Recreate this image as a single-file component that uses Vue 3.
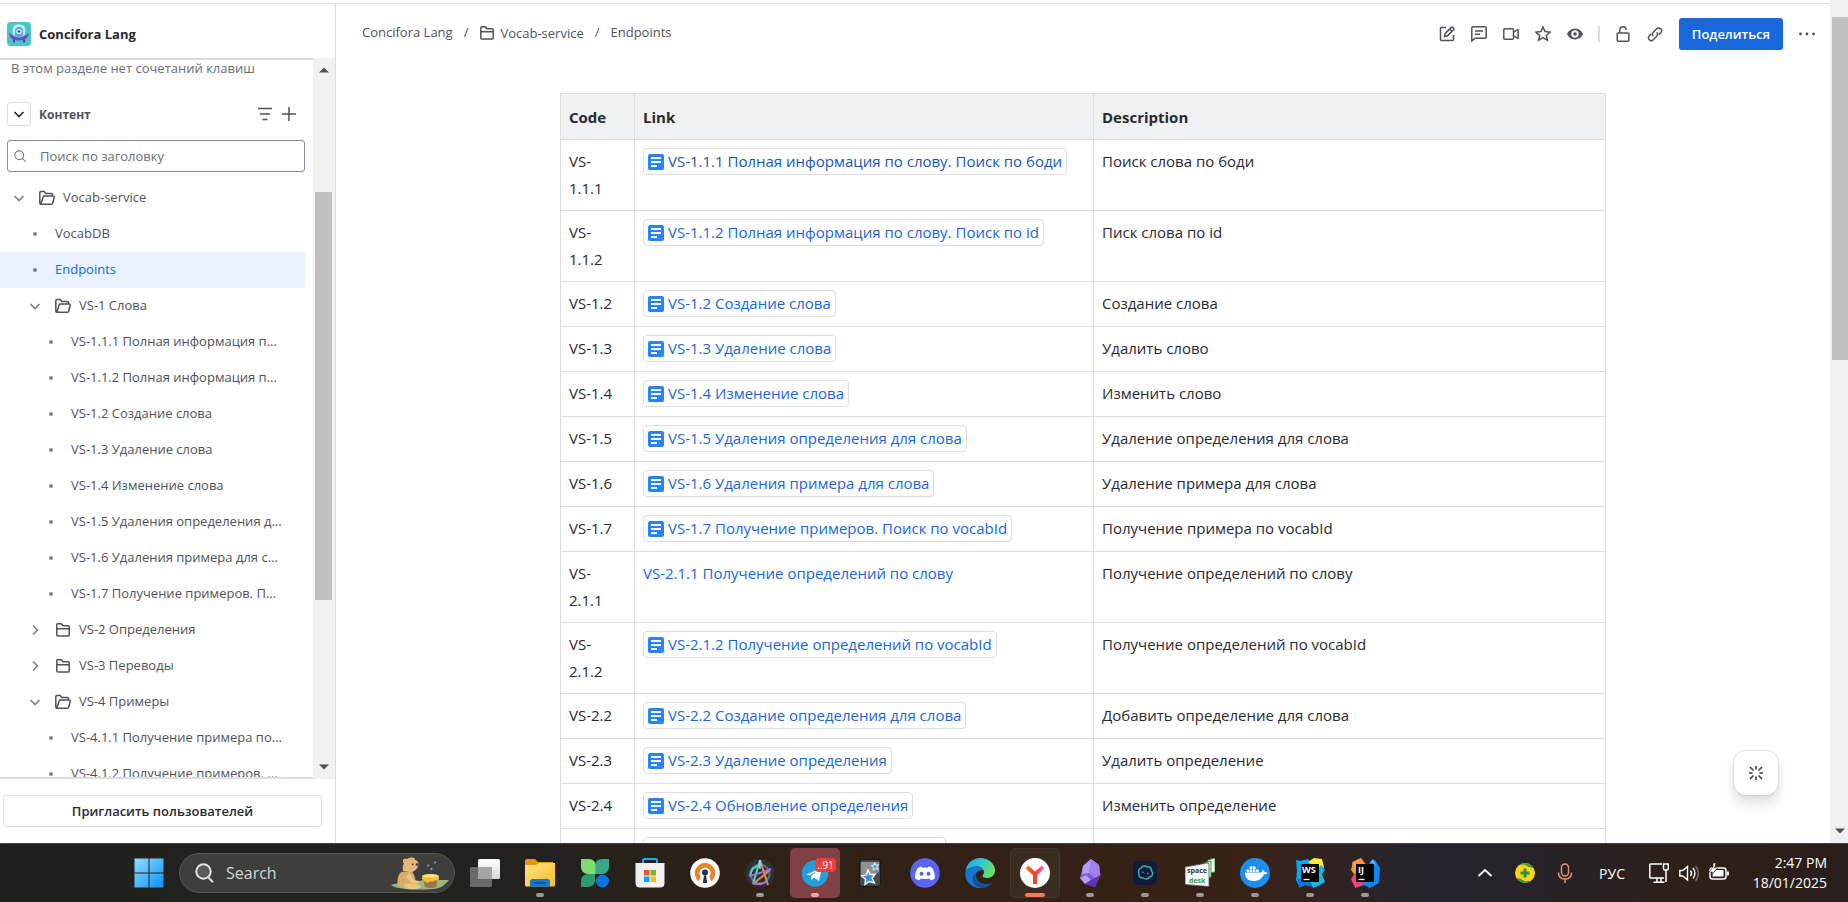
<script setup>
import { ref } from 'vue'

const query = ref('')

const tree = [
  { level: 0, kind: 'open', title: 'Vocab-service' },
  { level: 1, kind: 'page', title: 'VocabDB' },
  { level: 1, kind: 'page', title: 'Endpoints', active: true },
  { level: 1, kind: 'open', title: 'VS-1 Слова' },
  { level: 2, kind: 'page', title: 'VS-1.1.1 Полная информация п...' },
  { level: 2, kind: 'page', title: 'VS-1.1.2 Полная информация п...' },
  { level: 2, kind: 'page', title: 'VS-1.2 Создание слова' },
  { level: 2, kind: 'page', title: 'VS-1.3 Удаление слова' },
  { level: 2, kind: 'page', title: 'VS-1.4 Изменение слова' },
  { level: 2, kind: 'page', title: 'VS-1.5 Удаления определения д...' },
  { level: 2, kind: 'page', title: 'VS-1.6 Удаления примера для с...' },
  { level: 2, kind: 'page', title: 'VS-1.7 Получение примеров. П...' },
  { level: 1, kind: 'closed', title: 'VS-2 Определения' },
  { level: 1, kind: 'closed', title: 'VS-3 Переводы' },
  { level: 1, kind: 'open', title: 'VS-4 Примеры' },
  { level: 2, kind: 'page', title: 'VS-4.1.1 Получение примера по...' },
  { level: 2, kind: 'page', title: 'VS-4.1.2 Получение примеров. ...' },
]

const rows = [
  { code: '1.1.1', link: 'VS-1.1.1 Полная информация по слову. Поиск по боди', text: 'Поиск слова по боди', hover: true },
  { code: '1.1.2', link: 'VS-1.1.2 Полная информация по слову. Поиск по id', text: 'Писк слова по id' },
  { code: '1.2', link: 'VS-1.2 Создание слова', text: 'Создание слова' },
  { code: '1.3', link: 'VS-1.3 Удаление слова', text: 'Удалить слово' },
  { code: '1.4', link: 'VS-1.4 Изменение слова', text: 'Изменить слово' },
  { code: '1.5', link: 'VS-1.5 Удаления определения для слова', text: 'Удаление определения для слова' },
  { code: '1.6', link: 'VS-1.6 Удаления примера для слова', text: 'Удаление примера для слова' },
  { code: '1.7', link: 'VS-1.7 Получение примеров. Поиск по vocabId', text: 'Получение примера по vocabId' },
  { code: '2.1.1', link: 'VS-2.1.1 Получение определений по слову', text: 'Получение определений по слову', plain: true },
  { code: '2.1.2', link: 'VS-2.1.2 Получение определений по vocabId', text: 'Получение определений по vocabId' },
  { code: '2.2', link: 'VS-2.2 Создание определения для слова', text: 'Добавить определение для слова' },
  { code: '2.3', link: 'VS-2.3 Удаление определения', text: 'Удалить определение' },
  { code: '2.4', link: 'VS-2.4 Обновление определения', text: 'Изменить определение' },
  { code: '', link: '', text: '' },
]
</script>

<template>
  <div class="screen">
    <div class="browser">
      <div class="page">
        <aside class="sidebar">
          <div class="space">
            <svg class="space-logo" viewBox="0 0 24 24" aria-hidden="true">
              <rect width="24" height="24" rx="4" fill="#4bc5c5" />
              <path d="M7 17v3.500M17 17v3.500" stroke="#403294" stroke-width="1.600" />
              <path d="M6 11.500C4.500 3 9 2.500 12 2.500S19.500 3 18 11.500c0 2-2.500 3.200-6 3.200s-6-1.200-6-3.200z" fill="#c9f2fa" />
              <path d="M2.500 11c1 0 3 4.500 9.500 4.500S20.500 11 21.500 11c.5 5-3.500 7.500-9.500 7.500S2 16 2.500 11z" fill="#6b4fc1" />
              <path d="M7.800 14.200V9a4.200 4.200 0 0 1 8.400 0v5.200c-2.500 1-6 1-8.400 0z" fill="#57a9e6" />
              <circle cx="12" cy="9.500" r="2.500" fill="#fff" />
              <circle cx="12" cy="9.500" r="1.300" fill="#253858" />
            </svg>
            <strong>Concifora Lang</strong>
          </div>

          <div class="side-body">
            <nav class="side-scroll">
              <p class="hint">В этом разделе нет сочетаний клавиш</p>
              <div class="section">
                <button class="collapse" aria-label="Свернуть">
                  <svg viewBox="0 0 16 16" width="16" height="16"><path d="M3.500 6L8 10.500 12.500 6" fill="none" stroke="#292a2e" stroke-width="1.700" /></svg>
                </button>
                <h2>Контент</h2>
                <button class="bare" aria-label="Фильтр">
                  <svg viewBox="0 0 16 16" width="16" height="16"><path d="M1 2.500h14M3 8h10M5.500 13.500h5" fill="none" stroke="#505258" stroke-width="1.500" /></svg>
                </button>
                <button class="bare" aria-label="Создать">
                  <svg viewBox="0 0 16 16" width="16" height="16"><path d="M8 1v14M1 8h14" fill="none" stroke="#505258" stroke-width="1.500" /></svg>
                </button>
              </div>
              <label class="search">
                <svg viewBox="0 0 16 16" width="12" height="12" aria-hidden="true"><path d="M11.500 11.500L15.500 15.500M12.800 7a5.800 5.800 0 1 1-11.600 0a5.800 5.800 0 0 1 11.600 0z" fill="none" stroke="#7d818a" stroke-width="1.500" /></svg>
                <input v-model="query" type="text" placeholder="Поиск по заголовку" aria-label="Поиск по заголовку" />
              </label>
              <ul class="tree">
                <li v-for="node in tree" :key="node.title" :class="['node', 'level-' + node.level, { active: node.active }]">
                  <span class="marker">
                    <i v-if="node.kind === 'page'" class="bullet"></i>
                    <svg v-else viewBox="0 0 16 16" width="16" height="16">
                      <path :d="node.kind === 'open' ? 'M3.500 6l4.500 4.500L12.500 6' : 'M6 3.500L10.500 8L6 12.500'" fill="none" stroke="#7d818a" stroke-width="1.600" />
                    </svg>
                  </span>
                  <svg v-if="node.kind === 'open'" class="folder" viewBox="0 0 16 16" width="16" height="16">
                    <path d="M2 14.200c-.8 0-1.200-.5-1.200-1.200V2.800c0-.7.4-1.200 1.100-1.200h3.300l1.700 2h5.400c.7 0 1.200.5 1.200 1.200V6M1.800 14.200h10.700c.6 0 1-.3 1.200-.9l1.500-6c.2-.8-.2-1.300-1-1.300H5.300c-.6 0-1 .3-1.200.9L1.800 14.200" fill="none" stroke="#505258" stroke-width="1.500" />
                  </svg>
                  <svg v-if="node.kind === 'closed'" class="folder" viewBox="0 0 16 16" width="16" height="16">
                    <path d="M1.800 6.800h12.400M1.800 13V2.800c0-.6.4-1 1-1h3.500l1.700 2h5.200c.6 0 1 .4 1 1V13c0 .6-.4 1-1 1H2.800c-.6 0-1-.4-1-1z" fill="none" stroke="#505258" stroke-width="1.500" />
                  </svg>
                  <a href="#">{{ node.title }}</a>
                </li>
              </ul>
            </nav>
            <div class="side-bar">
              <svg viewBox="0 0 10 6" width="10" height="6"><path d="M0 5.500L5 .5L10 5.500z" fill="#505050" /></svg>
              <div class="side-thumb"></div>
              <svg viewBox="0 0 10 6" width="10" height="6"><path d="M0 .5h10L5 5.500z" fill="#505050" /></svg>
            </div>
          </div>

          <div class="invite">
            <button>Пригласить пользователей</button>
          </div>
        </aside>

        <main class="main">
          <header class="topbar">
            <nav class="crumbs">
              <a href="#">Concifora Lang</a>
              <span>/</span>
              <a href="#" class="crumb-folder">
                <svg viewBox="0 0 16 16" width="16" height="16"><path d="M1.800 6.800h12.400M1.800 13V2.800c0-.6.4-1 1-1h3.500l1.700 2h5.200c.6 0 1 .4 1 1V13c0 .6-.4 1-1 1H2.800c-.6 0-1-.4-1-1z" fill="none" stroke="#505258" stroke-width="1.500" /></svg>
                Vocab-service
              </a>
              <span>/</span>
              <a href="#">Endpoints</a>
            </nav>
            <div class="actions">
              <button class="bare" aria-label="Редактировать">
                <svg viewBox="0 0 16 16"><path d="M7 1.500H2.500c-.6 0-1 .4-1 1v11c0 .6.400 1 1 1h11c.6 0 1-.4 1-1V9M5.500 10.500l.7-3L12.300 1.400c.4-.4 1-.4 1.400 0l.9.9c.4.400.4 1 0 1.400L8.500 9.800l-3 .7zM10.800 3l2.300 2.300" /></svg>
              </button>
              <button class="bare" aria-label="Комментарии">
                <svg viewBox="0 0 16 16"><path d="M.8 15V2c0-.7.500-1.200 1.200-1.200h12c.7 0 1.200.5 1.200 1.200v9c0 .7-.5 1.200-1.200 1.200H4L.8 15zM4 5h8M4 8.200h5" /></svg>
              </button>
              <button class="bare" aria-label="Видео">
                <svg viewBox="0 0 16 16"><path d="M1.800 2.800h7.700c.6 0 1 .4 1 1v8.400c0 .6-.4 1-1 1H1.800c-.6 0-1-.4-1-1V3.800c0-.6.4-1 1-1zM10.500 6.500l3.500-2.500h1.200v8H14l-3.500-2.500" /></svg>
              </button>
              <button class="bare" aria-label="В избранное">
                <svg viewBox="0 0 16 16"><path d="M8 1l2 4.600 5 .5-3.700 3.300 1.100 4.900L8 11.700l-4.400 2.600 1.100-4.900L1 6.100l5-.5z" /></svg>
              </button>
              <button class="bare" aria-label="Отслеживать">
                <svg viewBox="0 0 16 16"><path class="solid" fill-rule="evenodd" d="M8 2.500c3.800 0 6.500 2.300 8 5.500-1.500 3.200-4.200 5.500-8 5.500S1.500 11.200 0 8c1.500-3.200 4.200-5.500 8-5.500zm0 1.800a3.700 3.700 0 1 0 0 7.400a3.700 3.700 0 0 0 0-7.400zm0 1.900a1.800 1.800 0 1 1 0 3.600a1.800 1.800 0 0 1 0-3.600z" /></svg>
              </button>
              <i class="divider"></i>
              <button class="bare" aria-label="Ограничения">
                <svg viewBox="0 0 16 16"><path d="M3.200 7h9.600c.6 0 1 .4 1 1v6.200c0 .6-.4 1-1 1H3.200c-.6 0-1-.4-1-1V8c0-.6.4-1 1-1zM4.800 7V4c0-2 1.200-3.200 3.200-3.200S11.200 2 11.200 4" /></svg>
              </button>
              <button class="bare" aria-label="Скопировать ссылку">
                <svg viewBox="0 0 16 16"><path d="M6.300 10.200c-1.200-1.200-1.200-2.800 0-4l3.400-3.400c1.200-1.200 2.800-1.200 4 0s1.200 2.800 0 4L12 8.500M9.700 6.300c1.200 1.200 1.200 2.800 0 4l-3.400 3.400c-1.200 1.200-2.800 1.200-4 0s-1.200-2.800 0-4L4 8" /></svg>
              </button>
              <button class="share">Поделиться</button>
              <button class="bare" aria-label="Другие действия">
                <svg viewBox="0 0 16 16"><path class="solid" d="M1.500 6.600a1.400 1.400 0 1 1 0 2.800a1.400 1.400 0 0 1 0-2.800zM8 6.600a1.400 1.400 0 1 1 0 2.800a1.400 1.400 0 0 1 0-2.800zM14.500 6.600a1.400 1.400 0 1 1 0 2.800a1.400 1.400 0 0 1 0-2.800z" /></svg>
              </button>
            </div>
          </header>

          <table class="endpoints">
            <colgroup><col class="col-code" /><col class="col-link" /><col /></colgroup>
            <thead>
              <tr><th>Code</th><th>Link</th><th>Description</th></tr>
            </thead>
            <tbody>
              <tr v-for="row in rows" :key="row.code">
                <td class="code"><template v-if="row.code">VS-<wbr />{{ row.code }}</template></td>
                <td>
                  <a v-if="row.plain" href="#" class="plain">{{ row.link }}</a>
                  <a v-else href="#" :class="['smart', { hover: row.hover, blank: !row.link }]">
                    <svg viewBox="0 0 16 16" width="16" height="16" aria-hidden="true">
                      <rect width="16" height="16" rx="2" fill="#2684ff" />
                      <path d="M3 4h10M3 8h10M3 12h6" stroke="#fff" stroke-width="1.800" />
                    </svg>
                    <span>{{ row.link }}</span>
                  </a>
                </td>
                <td>{{ row.text }}</td>
              </tr>
            </tbody>
          </table>

          <button class="quick" aria-label="Быстрые действия">
            <svg viewBox="0 0 16 16" width="16" height="16"><path d="M8 1v3.500M8 11.500V15M1 8h3.500M11.500 8H15M2 2l3.500 3.500M10.500 10.500L14 14M14 2l-3.500 3.500M5.500 10.500L2 14" fill="none" stroke="#3b3d42" stroke-width="1.600" /></svg>
          </button>
        </main>
      </div>
      <div class="page-bar">
        <div class="page-thumb"></div>
        <svg viewBox="0 0 10 6" width="10" height="6"><path d="M0 .5h10L5 5.500z" fill="#505050" /></svg>
      </div>
    </div>

    <footer class="taskbar">
      <button class="app" aria-label="Start">
        <svg viewBox="0 0 30 30">
          <defs><linearGradient id="win" x1="0" y1="0" x2="1" y2="1"><stop offset="0" stop-color="#8fe0ff" /><stop offset="1" stop-color="#0a90f8" /></linearGradient></defs>
          <path d="M.5.500h14v14H.5zM15.500.500h14v14h-14zM.5 15.500h14v14H.5zM15.500 15.500h14v14h-14z" fill="url(#win)" />
        </svg>
      </button>
      <button class="task-search">
        <svg class="lens" viewBox="0 0 20 20" width="20" height="20"><circle cx="8.500" cy="8.500" r="7.200" fill="#5a5a5a" stroke="#e6e6e6" stroke-width="2" /><path d="M13 14l5 5.200" stroke="#cfcfcf" stroke-width="2.200" /></svg>
        <span>Search</span>
        <svg class="bear" viewBox="0 0 60 34" width="60" height="34">
          <path d="M1 29c5-2 10-2 18-1l14-4h26c-4 5-9 9-16 9-14 1-36 1-42-4z" fill="#9bb57a" />
          <path d="M11 16c-4 4-5 12-1 15 3 2 11 2 14-1 3-4 1-12-3-15z" fill="#d9ae68" />
          <path d="M13 15c0-4-1-5 1-7-2-3-1-7 3-5 4-2 8-2 8 1 3 0 4 4 3 6-1 4-5 6-7 6z" fill="#e2b975" />
          <path d="M19 16l5 8 5 1-1 3-6-1-6-6zM14 29c4-3 13-1 17 1 0 2-3 3-7 3-4 1-10 0-10-4z" fill="#eac684" />
          <path d="M22 8l1.500.5" stroke="#4a3520" stroke-width="1.400" />
          <circle cx="27" cy="8.500" r="1.300" fill="#4a3520" />
          <path d="M33 21h15l-1.500 9c-1 2.500-11 2.500-12 0z" fill="#9a7355" />
          <path d="M32 20c0-2 17-2 17 0v3c-2 3-3 0-5 2s-4-1-5 1-5-1-7-3z" fill="#f3bf36" />
          <ellipse cx="40.500" cy="19.800" rx="7.500" ry="1.800" fill="#ffe27c" />
          <path d="M37 10l2-1M41 14l1-2M44 7l2-1" stroke="#7098c4" stroke-width="1.800" />
        </svg>
      </button>
      <button class="app" aria-label="Task view">
        <svg viewBox="0 0 30 30"><defs><linearGradient id="tv" x1="0" y1="0" x2="0" y2="1"><stop offset="0" stop-color="#fff" /><stop offset="1" stop-color="#d8d8d8" /></linearGradient></defs><rect x="8" y="1" width="22" height="20" rx="1.500" fill="url(#tv)" /><rect x="0" y="9" width="22" height="20" rx="1.500" fill="#777" fill-opacity=".85" /><rect x="8" y="9" width="14" height="12" fill="#a4a4a4" /></svg>
      </button>
      <button class="app run" aria-label="Explorer">
        <svg viewBox="0 0 30 30"><defs><linearGradient id="fold" x1="0" y1="0" x2="1" y2="1"><stop offset="0" stop-color="#ffe08a" /><stop offset="1" stop-color="#fdbf20" /></linearGradient></defs><path d="M0 3c0-1 .8-2 2-2h8l3 3h15v8H0z" fill="#dd9a10" /><path d="M0 7h11l3-2h16v22c0 1-.8 1.500-1.500 1.500h-27C.8 28.500 0 28 0 27z" fill="url(#fold)" /><path d="M5 28.500v-5c0-1.500 1-2.500 2.500-2.500h15c1.500 0 2.500 1 2.500 2.500v5z" fill="#0c7bd0" /><path d="M9 25h12" stroke="#0a4c92" stroke-width="1.500" /></svg>
      </button>
      <button class="app" aria-label="Butterfly">
        <svg viewBox="0 0 30 30"><path d="M29 1h-7c-4 0-7 3-7 6v9h7c4 0 7-3 7-7z" fill="#38a68b" /><path d="M1 29h7c4 0 7-3 7-7v-6H8c-4 0-7 3-7 7z" fill="#2f9a72" /><path d="M1 1h8c4 0 6.500 3 6.500 6v9H8c-4 0-7-3-7-7z" fill="#7ddb76" /><circle cx="22.500" cy="23" r="6.500" fill="#0e72de" /></svg>
      </button>
      <button class="app" aria-label="Store">
        <svg viewBox="0 0 30 30"><path d="M8 6V2.500C8 1.500 8.500 1 9.500 1h11c1 0 1.500.5 1.500 1.500V6" fill="none" stroke="#22a7f2" stroke-width="2" /><path d="M.5 5h29v20c0 3-1.500 4.500-4.500 4.500H5c-3 0-4.500-1.500-4.500-4.500z" fill="#f1f1f1" /><path d="M9 12h5.500v5.500H9z" fill="#f0542b" /><path d="M15.500 12H21v5.500h-5.500z" fill="#7fb900" /><path d="M9 18.500h5.500V24H9z" fill="#13a2f0" /><path d="M15.500 18.500H21V24h-5.500z" fill="#fdb912" /></svg>
      </button>
      <button class="app" aria-label="OpenVPN">
        <svg viewBox="0 0 30 30"><circle cx="15" cy="15" r="14.800" fill="#fff" /><path d="M9 23.500a10.200 10.200 0 1 1 12 0l-1.600-5.300a5.400 5.400 0 1 0-8.800 0z" fill="#ea8226" /><path d="M12.800 25l1.200-7.500h2l1.200 7.500z" fill="#1b3355" /><circle cx="15" cy="14.500" r="3" fill="#1b3355" /></svg>
      </button>
      <button class="app run" aria-label="Astro">
        <svg viewBox="0 0 30 30"><circle cx="15" cy="15" r="14.500" fill="#2b3134" /><circle cx="15" cy="16" r="9.500" fill="none" stroke="#5b6d86" stroke-width="2" /><path d="M15 2L8 26M5 18c1-7 5-10 10-10" fill="none" stroke="#54d5c0" stroke-width="2" /><path d="M15 2l8 25M25 12L8 26" fill="none" stroke="#ec8942" stroke-width="2" /><path d="M4 18c6-1 14-4 22-7M8 25c5 2 10 1 14-2" fill="none" stroke="#a571de" stroke-width="2" /><path d="M15 2v9" stroke="#b3d5ff" stroke-width="1.500" /></svg>
      </button>
      <button class="app run alert" aria-label="Telegram">
        <svg viewBox="0 0 30 30"><circle cx="15" cy="15.500" r="13.200" fill="#239fdb" /><path d="M6.500 16.500L22 9.500 19 23l-5-3.500-2.500 2.500-.5-4 7-6-8.500 5.500z" fill="#fff" /></svg>
        <span class="count">..91</span>
      </button>
      <button class="app" aria-label="Anki">
        <svg viewBox="0 0 30 30"><rect x="4.500" y="1.500" width="21" height="27" rx="3" fill="#474747" stroke="#161616" /><path d="M6 4h18v10c-4 4-12 0-18 4z" fill="#8d8f90" /><path d="M13 12l2.200 4.500 5-.3-3 4 2.300 4.800-5.200-1.500-4.300 2.800.5-5-3.800-3.300 4.800-1.300z" fill="#3c8fe0" stroke="#fff" stroke-width="1.400" /><path d="M19.500 4.500l1.200 2.500 2.800-.3-1.600 2.200 1.200 2.600-2.700-.8-2.200 1.500.2-2.700-2-1.700 2.600-.7z" fill="#5aa5ec" stroke="#fff" stroke-width=".8" /></svg>
      </button>
      <button class="app" aria-label="Discord">
        <svg viewBox="0 0 30 30"><circle cx="15" cy="15" r="14.800" fill="#5865f2" /><path d="M11.700 8.500l.7 1.300a14 14 0 0 1 5.200 0l.7-1.300c1.600.2 2.800.7 4 1.400 2 3.200 2.900 6.700 2.500 10.500-1.300 1-2.800 1.600-4.400 1.900l-1.100-1.900c-2.800.7-5.800.7-8.600 0l-1.100 1.900c-1.600-.3-3.100-.9-4.400-1.900-.4-3.800.5-7.300 2.500-10.500 1.200-.7 2.400-1.200 4-1.400z" fill="#fff" /><circle cx="11.500" cy="15.800" r="2" fill="#5865f2" /><circle cx="18.500" cy="15.800" r="2" fill="#5865f2" /></svg>
      </button>
      <button class="app" aria-label="Edge">
        <svg viewBox="0 0 30 30"><defs><linearGradient id="edge" x1="0" y1="0" x2="1" y2=".4"><stop offset="0" stop-color="#229fe0" /><stop offset=".5" stop-color="#31c3d8" /><stop offset="1" stop-color="#6be063" /></linearGradient></defs><path d="M.5 13C2 5 8 0 15 0c9 0 15 6 15 12.500 0 4.500-3.500 7.500-8 7.500-3 0-4.500-1-4.500-2s1.500-1.500 1.500-4c0-3-3-5.500-7-5.500C7 8.500 3 10 .5 13z" fill="url(#edge)" /><path d="M.3 14C3 9 8 8 12 8.500c4 .5 6 2 6.500 4-6-1-8 2.500-7.500 6 .8 5 6 9 13 7.500-2 2.500-5 4-9 4C6 30-.5 23 .3 14z" fill="#1577cf" /><path d="M11 15c-2 7 3 12 9 11.800 3 0 6-1.300 7.500-2.800-1 1.800-2 3-3.500 4-4 2.800-9 2.500-12.500 0C7 25 6 18 11 15z" fill="#0e4f9c" /></svg>
      </button>
      <button class="app current" aria-label="Yandex Browser">
        <svg viewBox="0 0 30 30"><defs><linearGradient id="ya" x1="0" y1="0" x2="1" y2="0"><stop offset="0" stop-color="#ff6a1c" /><stop offset=".5" stop-color="#f7392c" /><stop offset="1" stop-color="#f661c8" /></linearGradient></defs><circle cx="15" cy="15" r="15" fill="#fff" /><path d="M7 9l8 7.500L23 9" fill="none" stroke="url(#ya)" stroke-width="4" /><path d="M15 15.500V26" stroke="#f5452c" stroke-width="4" /></svg>
      </button>
      <button class="app run" aria-label="Obsidian">
        <svg viewBox="0 0 30 30"><path d="M16 1l8 6 1.500 10-5.500 12-10-3-5-6 3-12z" fill="#8058dd" /><path d="M16 1L8 8l-1 8 7-1zM5 20l6-3 5 5-6 4z" fill="#b89df5" /><path d="M16 1l-2 14 6 5 5-3-1-10z" fill="#a281ef" /><path d="M16 22l4-2 5-3-5 12-10-3z" fill="#5c35b5" /></svg>
      </button>
      <button class="app run" aria-label="AI">
        <svg viewBox="0 0 30 30"><rect x="3" y="3" width="24" height="24" rx="5" fill="#121a3c" /><path d="M11 10c2-3 5-2 6-1 3-1 5 2 4.500 4 2 2 1 6-2 6-2 3-5 2-6.500 1-3 0-5-2-4-4.500-1-2.500 0-4.500 2-5.500z" fill="none" stroke="#2fb5a5" stroke-width="1.500" /><path d="M13 13.500v1.500M17 15.500h1.500" stroke="#4fa0d8" stroke-width="1.500" /></svg>
      </button>
      <button class="app run" aria-label="spacedesk">
        <svg viewBox="0 0 30 30"><path d="M23 2l7-2v14l-7 1z" fill="#fff" stroke="#2f9b46" /><path d="M19 5l7-2v16l-7 2z" fill="#eee" stroke="#2f9b46" /><path d="M0 9L22 5l2 .5v23L0 26.500z" fill="#f7f7f7" stroke="#555" stroke-width=".8" /><text x="2" y="15" font-size="7" font-weight="700" fill="#3a3a3a">space</text><text x="4" y="25" font-size="7" font-weight="700" fill="#35a04b">desk</text></svg>
      </button>
      <button class="app run" aria-label="Docker">
        <svg viewBox="0 0 30 30"><circle cx="15" cy="15" r="15" fill="#1d8dee" /><path d="M5 14.500h16c1 0 1.800-1.500 1.500-3 1.300.4 2 1.300 2 2.500 1 0 2 .2 2.800.8-.8 1.300-2 1.700-3.500 1.700C22 21 18 23 13.500 23 8 23 5 20 5 14.500zM6.500 11.500h2.600V14H6.500zM9.700 11.500h2.600V14H9.700zM12.900 11.500h2.600V14h-2.600zM16.100 11.500h2.600V14h-2.600zM9.700 8.500h2.600V11H9.700zM12.900 8.500h2.600V11h-2.600z" fill="#fff" /></svg>
      </button>
      <button class="app run" aria-label="WebStorm">
        <svg viewBox="0 0 30 30"><path d="M1 2l4 1 8-2 5 7-4 20-4-1-5 2L1 22l1-9z" fill="#09a9f0" /><path d="M13 4l6-4 8 1 2 8-3 5z" fill="#f4ee3b" /><path d="M26 7l4 5-3 4 3 8-5 3-7 3-4-8z" fill="#0fb8e8" /><path d="M2 20l12 4 4 5-8-2-6 3z" fill="#0878e8" /><rect x="6" y="6" width="18" height="18" fill="#050505" /><text x="7" y="15" font-size="9" font-weight="700" fill="#fff">WS</text><path d="M8.500 21.500h6" stroke="#fff" stroke-width="1.300" /></svg>
      </button>
      <button class="app run" aria-label="IntelliJ IDEA">
        <svg viewBox="0 0 30 30"><path d="M2 4l9-4 6 7-3 20-9 3-4-9 3-5z" fill="#fe3c7b" /><path d="M3 4l8-4 5 8-12 8-3-4z" fill="#fd9a33" /><path d="M20 4l5-2 5 8-1 15-9 5-8-4z" fill="#1585f2" /><path d="M20 4l3-3 3 6z" fill="#37c7f5" /><rect x="6" y="6" width="18" height="18" fill="#050505" /><text x="8" y="15" font-size="9" font-weight="700" fill="#fff">IJ</text><path d="M8.500 21.500h6" stroke="#fff" stroke-width="1.300" /></svg>
      </button>

      <div class="tray">
        <svg viewBox="0 0 20 20"><path d="M3.500 13L10 7l6.500 6" fill="none" stroke="#fff" stroke-width="1.800" /></svg>
        <svg viewBox="0 0 20 20"><circle cx="10" cy="10" r="10" fill="#fcd31c" /><path d="M4 2C8-1 15-.5 18.500 5L14 4C10 1 7 2 4 2zM16 18C12 21 5 20.500 1.500 15L6 16c4 3 7 2 10 2z" fill="#2f9d3a" /><path d="M10 5.500v9M5.500 10h9" stroke="#21963a" stroke-width="3" /></svg>
        <svg viewBox="0 0 20 20"><rect x="6.500" y="1" width="7" height="12" rx="3.500" fill="none" stroke="#e8967a" stroke-width="1.400" /><path d="M3.500 9.500c0 4 2.500 6.500 6.500 6.500s6.500-2.500 6.500-6.500M10 16v4" fill="none" stroke="#e8967a" stroke-width="1.400" /></svg>
        <span class="lang">РУС</span>
        <svg viewBox="0 0 20 20"><path d="M13 1H1.500C1 1 .8 1.200.8 1.800v12.500c0 .5.200.7.700.7h13.500M8 15v4M12 15v4M4.500 19.200h11M14.500 1h4.800v4.500c0 1-.5 1.500-1.500 1.500h-1.800c-1 0-1.500-.5-1.500-1.500zM17 7v12" fill="none" stroke="#fff" stroke-width="1.500" /></svg>
        <svg viewBox="0 0 20 20"><path d="M.8 7.500v5.500h3L8.500 17V3.500l-4.700 4zM11.500 7.500c1.200 1.500 1.200 4 0 5.500M14 5c2.500 3 2.500 7.500 0 10.500" fill="none" stroke="#fff" stroke-width="1.400" /><path d="M16.500 3c3.800 4.500 3.800 10.500 0 15" fill="none" stroke="#777" stroke-width="1.400" /></svg>
        <svg viewBox="0 0 20 20"><rect x="1" y="5" width="16" height="11" rx="2.500" fill="none" stroke="#fff" stroke-width="1.500" /><path d="M3.500 10l4-3H14.500v6.500h-11zM18 8.500h1c.6 0 1 .4 1 1v2c0 .6-.4 1-1 1h-1z" fill="#fff" /><path d="M4 0v4l-4 5h3.500L2.500 12l6-7H5.500L7 0z" fill="#fff" stroke="#2b2018" stroke-width=".6" /></svg>
        <div class="clock"><span>2:47 PM</span><span>18/01/2025</span></div>
      </div>
    </footer>
  </div>
</template>

<style>
body {
  background: #fff;
}
</style>

<style scoped>
* {
  box-sizing: border-box;
}
.screen {
  display: flex;
  flex-direction: column;
  height: 100vh;
  overflow: hidden;
  font-family: "Open Sans", "Noto Sans", sans-serif;
  font-size: 13px;
  color: #292a2e;
}
button {
  font: inherit;
  color: inherit;
  border: 0;
  padding: 0;
  background: none;
}
a {
  color: inherit;
  text-decoration: none;
}
svg {
  flex: none;
  display: block;
}
.browser {
  display: flex;
  flex: 1;
  min-height: 0;
}
.page {
  display: flex;
  flex: 1;
  min-width: 0;
  margin-top: 3px;
  border-top: 1px solid #dddee1;
}

/* Sidebar */
.sidebar {
  display: flex;
  flex-direction: column;
  flex: none;
  width: 336px;
  border-right: 1px solid #dddee1;
}
.space {
  display: flex;
  align-items: center;
  gap: 8px;
  height: 54px;
  padding: 6px 7px 0;
}
.space-logo {
  width: 24px;
  height: 24px;
}
.space strong {
  font-weight: 700;
}
.side-body {
  display: flex;
  flex: 1;
  min-height: 0;
}
.side-scroll {
  flex: 1;
  overflow: hidden;
  border-top: 2px solid #d9dadd;
  border-bottom: 2px solid #dddee1;
  padding-right: 8px;
}
.hint {
  margin: 0 11px;
  line-height: 16px;
  color: #6b6e76;
}
.section {
  display: flex;
  align-items: center;
  gap: 8px;
  height: 24px;
  margin: 26px 8px 14px 7px;
}
.collapse {
  display: grid;
  place-items: center;
  width: 24px;
  height: 24px;
  border: 1px solid #dddee1;
  border-radius: 3px;
}
.section h2 {
  flex: 1;
  margin: 0;
  font-size: 12px;
  font-weight: 700;
  color: #505258;
}
.search {
  display: flex;
  align-items: center;
  gap: 14px;
  height: 32px;
  margin: 0 0 8px 7px;
  padding: 0 6px;
  border: 1px solid #8c8f97;
  border-radius: 3px;
}
.search input {
  flex: 1;
  min-width: 0;
  padding: 0;
  border: 0;
  outline: 0;
  background: none;
  font: inherit;
}
.search input::placeholder {
  color: #6b6e76;
}
.tree {
  margin: 0;
  padding: 0;
  list-style: none;
}
.node {
  display: flex;
  align-items: center;
  gap: 8px;
  height: 36px;
  padding-left: 7px;
  color: #505258;
  white-space: nowrap;
}
.node a {
  padding-bottom: 2px;
}
.level-1 {
  padding-left: 23px;
}
.level-2 {
  padding-left: 39px;
}
.active {
  background: #e9f2fe;
  border-radius: 0 3px 3px 0;
}
.active a {
  color: #1868db;
}
.marker {
  display: grid;
  place-items: center;
  width: 24px;
}
.bullet {
  width: 4px;
  height: 4px;
  border-radius: 50%;
  background: #7d818a;
}
.side-bar {
  display: flex;
  flex-direction: column;
  align-items: center;
  width: 22px;
  padding: 9px 3px 9px 2px;
  background: #f1f1f1;
}
.side-thumb {
  width: 17px;
  height: 58%;
  margin-top: 119px;
  margin-bottom: auto;
  background: #c1c1c1;
}
.invite {
  padding: 16px 13px 16px 3px;
}
.invite button {
  width: 100%;
  height: 32px;
  border: 1px solid #dddee1;
  border-radius: 3px;
  font-weight: 600;
}

/* Content */
.main {
  position: relative;
  flex: 1;
  min-width: 0;
  overflow: hidden;
}
.topbar {
  display: flex;
  justify-content: space-between;
  height: 60px;
  padding: 14px 15px 0 26px;
}
.crumbs {
  display: flex;
  align-items: center;
  gap: 11px;
  height: 28px;
  color: #505258;
}
.crumb-folder {
  display: flex;
  align-items: center;
  gap: 5px;
  padding-top: 2px;
}
.actions {
  display: flex;
  align-items: center;
  gap: 16px;
  height: 32px;
}
.actions .bare svg {
  width: 16px;
  height: 16px;
  fill: none;
  stroke: #505258;
  stroke-width: 1.500;
}
.actions .solid {
  fill: #505258;
  stroke: none;
}
.divider {
  width: 2px;
  height: 16px;
  margin: 0 -1px;
  background: #dddee1;
}
.share {
  height: 32px;
  padding: 0 13px;
  border-radius: 3px;
  background: #1868db;
  color: #fff;
  font-weight: 600;
}
.endpoints {
  width: calc(100% - 64px);
  max-width: 1046px;
  margin: 29px auto 0;
  table-layout: fixed;
  border-collapse: collapse;
  font-size: 15px;
  line-height: 27px;
}
.col-code {
  width: 74px;
}
.col-link {
  width: 459px;
}
.endpoints th,
.endpoints td {
  border: 1px solid #dddee1;
  padding: 8px;
  text-align: left;
  vertical-align: top;
}
.endpoints th {
  height: 46px;
  padding-top: 10px;
  background: #f0f1f2;
  font-weight: 700;
}
.endpoints td {
  height: 45px;
}
.endpoints .code {
  padding-right: 14px;
}
.plain,
.smart {
  color: #1868db;
}
.smart {
  display: inline-flex;
  align-items: center;
  gap: 4px;
  height: 27px;
  padding: 0 4px;
  border: 1px solid #dddee1;
  border-radius: 4px;
  vertical-align: top;
  white-space: nowrap;
}
.smart.hover {
  color: #1558bc;
}
.smart.blank {
  width: 303px;
}
.quick {
  position: absolute;
  right: 52px;
  bottom: 48px;
  display: grid;
  place-items: center;
  width: 44px;
  height: 44px;
  border-radius: 12px;
  background: #fff;
  box-shadow: 0 8px 12px rgba(30, 31, 33, 0.15), 0 0 2px rgba(30, 31, 33, 0.3);
}
.page-bar {
  display: flex;
  flex-direction: column;
  align-items: flex-end;
  width: 18px;
  padding: 17px 0 9px;
  background: #f1f1f1;
}
.page-thumb {
  width: 16px;
  height: 42%;
  margin-bottom: auto;
  background: #c1c1c1;
}
.page-bar svg {
  margin-right: 3px;
}

/* Taskbar */
.taskbar {
  display: flex;
  align-items: center;
  gap: 5px;
  flex: none;
  height: 59px;
  padding: 0 21px 0 124px;
  border-top: 1px solid #454545;
  background: linear-gradient(90deg, #20211f 0%, #222120 28%, #2d2116 40%, #352016 60%, #382218 68%, #25232d 77%, #25222a 82%, #2e2016 92%, #281e1c 100%);
}
.app {
  position: relative;
  display: grid;
  place-items: center;
  flex: none;
  width: 50px;
  height: 50px;
  padding-bottom: 1px;
  border-radius: 5px;
}
.app svg {
  width: 30px;
  height: 30px;
}
.run::after,
.current::after {
  content: "";
  position: absolute;
  bottom: 1px;
  left: 21px;
  width: 8px;
  height: 4px;
  border-radius: 2px;
  background: #9c9893;
}
.alert {
  background: #7f4144;
}
.alert::after {
  background: #ff9ca8;
}
.current {
  background: #3b2c22;
  border: 1px solid #45372d;
}
.current::after {
  left: 14px;
  bottom: 0;
  width: 20px;
  background: #f47c5d;
}
.count {
  position: absolute;
  top: 10px;
  right: 4px;
  padding: 0 2px;
  border-radius: 4px;
  background: #ec3f3c;
  color: #fff;
  font-size: 10px;
  line-height: 14px;
}
.task-search {
  display: flex;
  align-items: center;
  width: 276px;
  height: 40px;
  padding: 0 4px 0 15px;
  border: 1px solid #565656;
  border-radius: 20px;
  background: #3e3e3d;
  color: #d6d6d6;
  font-size: 16px;
}
.task-search span {
  flex: 1;
  margin-left: 11px;
  text-align: left;
}
.tray {
  display: flex;
  align-items: center;
  gap: 20px;
  margin-left: auto;
  color: #fff;
  font-size: 14px;
}
.tray svg {
  width: 20px;
  height: 20px;
}
.tray svg + svg:nth-of-type(n + 5) {
  margin-left: -10px;
}
.lang {
  margin: 0 4px;
}
.clock {
  display: flex;
  flex-direction: column;
  align-items: flex-end;
  min-width: 78px;
  line-height: 20px;
}
</style>
